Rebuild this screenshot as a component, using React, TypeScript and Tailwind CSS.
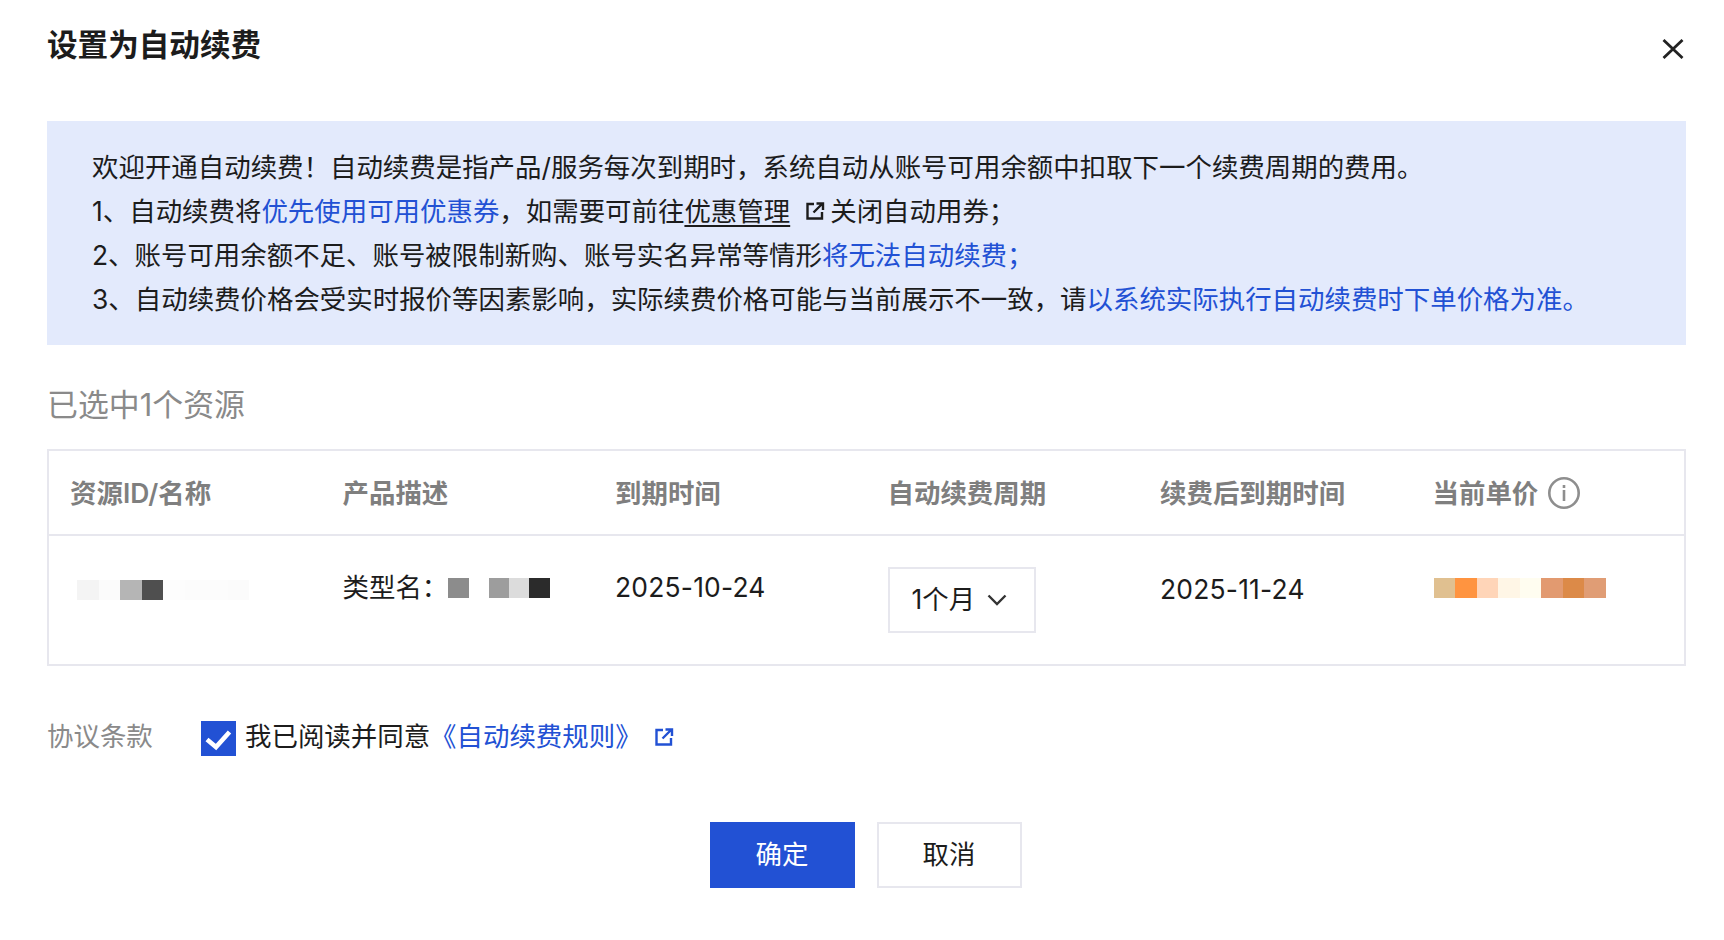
const font = { fontFamily: 'Inter, "Noto Sans CJK SC", sans-serif' };

function ExternalIcon({ className }: { className: string }) {
  return (
    <svg viewBox="0 0 20 20" fill="none" stroke="currentColor" strokeWidth="2.4" className={className}>
      <path d="M9 3H2.5v14.5H17V11" />
      <path d="M8.5 11.5L17 3M11.5 2.5h6.5V9" />
    </svg>
  );
}

function Mosaic({ colors, size }: { colors: string[]; size: number }) {
  return (
    <div className="flex h-5">
      {colors.map((c, i) => (
        <div key={i} className="h-5" style={{ backgroundColor: c, width: size }} />
      ))}
    </div>
  );
}

const headers = ["资源ID/名称", "产品描述", "到期时间", "自动续费周期", "续费后到期时间"];

export default function App() {
  return (
    <div
      className="w-[1724px] h-[940px] overflow-hidden bg-white text-[26.45px] text-[#1c1c1c] pl-[47px] pr-[38px] pt-[25px]"
      style={font}
    >
      {/* Header */}
      <div className="flex items-start justify-between h-[96px]">
        <h1 className="text-[30.6px] leading-[40px] font-semibold">设置为自动续费</h1>
        <button className="mt-[14px] mr-[2px] text-[#222]">
          <svg viewBox="0 0 22 20" className="w-[22px] h-5" fill="none" stroke="currentColor" strokeWidth="2.8">
            <path d="M1.5 1L20.5 19M20.5 1L1.5 19" />
          </svg>
        </button>
      </div>

      {/* Notice */}
      <div className="bg-[#e3eafc] py-6 pl-[45px] leading-[44px]">
        <p>欢迎开通自动续费！自动续费是指产品/服务每次到期时，系统自动从账号可用余额中扣取下一个续费周期的费用。</p>
        <p className="flex items-center">
          <span>1、自动续费将</span>
          <span className="text-[#2251d4]">优先使用可用优惠券</span>
          <span>，如需要可前往</span>
          <span className="underline underline-offset-4">优惠管理</span>
          <ExternalIcon className="w-5 h-5 ml-[15px] mr-[5px]" />
          <span>关闭自动用券；</span>
        </p>
        <p>
          2、账号可用余额不足、账号被限制新购、账号实名异常等情形
          <span className="text-[#2251d4]">将无法自动续费；</span>
        </p>
        <p>
          3、自动续费价格会受实时报价等因素影响，实际续费价格可能与当前展示不一致，请
          <span className="text-[#2251d4]">以系统实际执行自动续费时下单价格为准。</span>
        </p>
      </div>

      <h2 className="mt-[38px] text-[30.9px] leading-[44px] text-[#8a8a8a]">已选中1个资源</h2>

      {/* Table */}
      <div className="mt-[22px] border-2 border-[#e7e7ee] h-[217px]">
        <div className="grid grid-cols-6 h-[85px] pt-[2px] items-center border-b-2 border-[#e7e7ee] font-semibold text-[#7f7f7f]">
          {headers.map((h) => (
            <div key={h} className="pl-[21px]">{h}</div>
          ))}
          <div className="pl-[21px] flex items-center gap-[10px]">
            当前单价
            <svg viewBox="0 0 32 32" className="w-8 h-8" fill="none" stroke="#8e8e8e" strokeWidth="2.6">
              <circle cx="16" cy="16" r="14.7" />
              <path d="M16 13v11M16 8v3" />
            </svg>
          </div>
        </div>
        <div className="grid grid-cols-6 pt-[31px]">
          <div className="pl-[28px] pt-[13px]">
            <Mosaic size={21.5} colors={["#f4f4f4", "#fbfbfb", "#b5b5b5", "#4f4f4f", "#fdfdfd", "#fcfcfc", "#fcfcfc", "#fbfbfb"]} />
          </div>
          <div className="pl-[21px] flex items-start leading-[40px]">
            类型名：
            <div className="mt-[11px]">
              <Mosaic size={20.3} colors={["#8c8c8c", "#ffffff", "#9d9d9d", "#dcdcdc", "#2b2b2b"]} />
            </div>
          </div>
          <div className="pl-[21px] leading-[40px] tracking-[0.2px]">2025-10-24</div>
          <div className="pl-[21px]">
            <div className="w-[148px] h-[66px] border-2 border-[#e7e7ee] flex items-center pl-[22px] gap-3">
              1个月
              <svg viewBox="0 0 20 12" className="w-5 h-3" fill="none" stroke="#333" strokeWidth="2.4">
                <path d="M1.5 1.5L10 10L18.5 1.5" />
              </svg>
            </div>
          </div>
          <div className="pl-[21px] leading-[44px] tracking-[0.2px]">2025-11-24</div>
          <div className="pl-[22px] pt-[11px]">
            <Mosaic size={21.5} colors={["#e0c090", "#ff9440", "#ffd5b8", "#fff6e6", "#fffdf0", "#e29a70", "#dc8a48", "#e09d75"]} />
          </div>
        </div>
      </div>

      {/* Agreement */}
      <div className="mt-[51px] flex items-center">
        <span className="w-[154px] text-[#8a8a8a]">协议条款</span>
        <div className="w-[35px] h-[35px] bg-[#2251d4] mt-1 mr-[9px]">
          <svg viewBox="0 0 35 35" className="w-[35px] h-[35px]" fill="none" stroke="#fff" strokeWidth="4.6">
            <path d="M6 18.5L15 26L28.5 11" />
          </svg>
        </div>
        <span>我已阅读并同意</span>
        <span className="text-[#2251d4]">《自动续费规则》</span>
        <ExternalIcon className="w-5 h-5 ml-3 text-[#2251d4]" />
      </div>

      {/* Actions */}
      <div className="mt-[65px] pr-[2px] flex justify-center gap-[22px]">
        <button className="w-[145px] h-[66px] bg-[#2251d4] text-white">确定</button>
        <button className="w-[145px] h-[66px] border-2 border-[#e7e7ee]">取消</button>
      </div>
    </div>
  );
}
